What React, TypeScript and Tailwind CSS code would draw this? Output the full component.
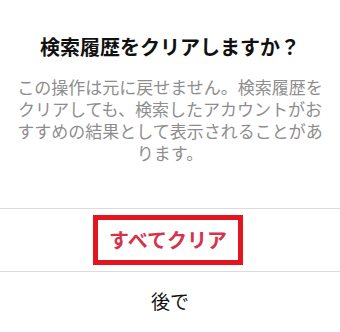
export default function App() {
  const lines = [
    'この操作は元に戻せません。検索履歴を',
    'クリアしても、検索したアカウントがお',
    'すすめの結果として表示されることがあ',
    'ります。',
  ];

  return (
    <div
      className="w-[340px] h-[332px] bg-white flex flex-col"
      style={{ fontFamily: '"Noto Sans CJK JP", "Noto Sans", sans-serif' }}
    >
      {/* Header */}
      <div className="pt-[35px] px-4 text-center">
        <h2 className="text-[20px] leading-[24px] font-bold text-[#111111]">
          検索履歴をクリアしますか？
        </h2>
        <p className="mt-[17px] text-[17px] leading-[22px] text-[#8e8e8e]">
          {lines.map((l, i) => (
            <span key={i} className="block whitespace-nowrap">
              {l}
            </span>
          ))}
        </p>
      </div>

      {/* Clear all */}
      <div className="mt-[44px] border-t border-[#dbdbdb] h-[63px] flex items-center justify-center pr-[4px]">
        <div className="w-[150px] h-[50px] border-[5px] border-[#e3151f] flex items-center justify-center text-[20px] font-bold text-[#d6334b]">
          すべてクリア
        </div>
      </div>

      {/* Later */}
      <div className="flex-1 border-t border-[#dbdbdb] flex items-center justify-center text-[19px] text-[#111111] pb-[2px]">
        後で
      </div>
    </div>
  );
}
